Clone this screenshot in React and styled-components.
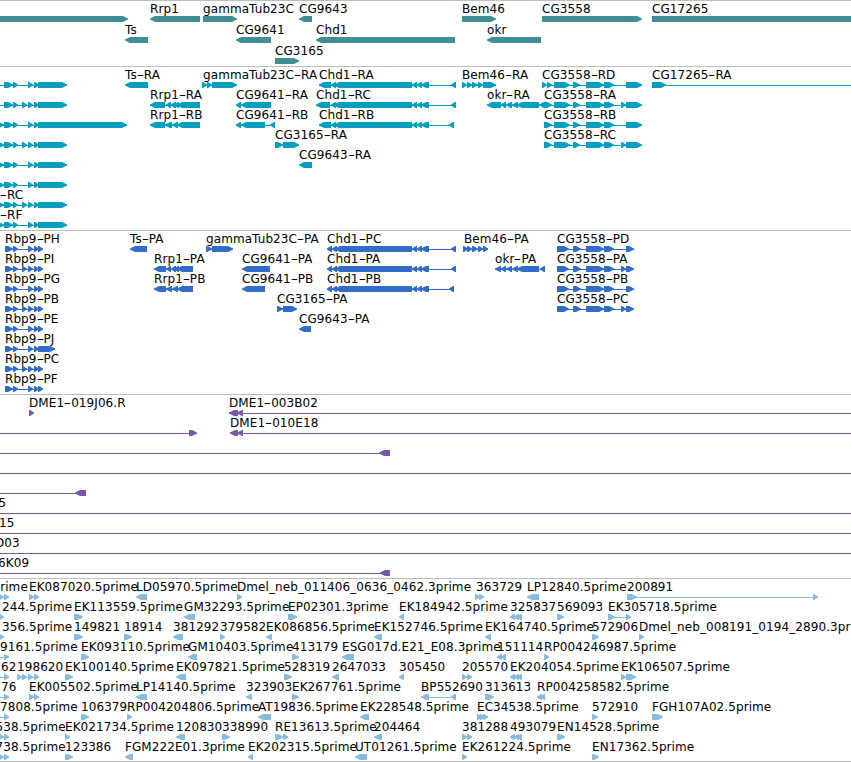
import React from "react";
import styled, { createGlobalStyle } from "styled-components";

const GlobalStyle = createGlobalStyle`
  body {
    margin: 0;
    background: #fff;
    overflow: hidden;
  }
`;

const Browser = styled.main`
  width: 851px;
  height: 762px;
  overflow: hidden;
  border-bottom: 1px solid #bebebe;
  box-sizing: border-box;
  font-family: "DejaVu Sans", sans-serif;
  font-size: 12px;
  letter-spacing: 0.08px;
  color: #000;
`;

const Track = styled.section`
  border-top: 1px solid #bebebe;
  padding: 1px 0 ${(p) => p.$gap}px;
  color: ${(p) => p.$color};
`;

const Row = styled.div`
  position: relative;
  display: flex;
  align-items: flex-start;
  height: ${(p) => p.$height}px;
  padding-top: 14px;
  box-sizing: border-box;
`;

const Strip = styled.svg`
  display: block;
  width: 851px;
  height: 6px;
  overflow: visible;
`;

const Label = styled.span`
  position: absolute;
  top: 0;
  left: ${(p) => p.$x}px;
  line-height: 14px;
  white-space: nowrap;
  color: #000;
`;

const Hyphen = styled.span`
  display: inline-block;
  width: 7px;
  text-align: center;
  transform: scaleX(1.7);
`;

// direction of the strand
const F = 1;
const R = -1;

const EDGE_L = -10;
const EDGE_R = 861;

// [label, strand, exons, { x: label position, from / to: ends of the line }]
const rbp = (extra, end = [38, 67], first = true) => [
  "",
  F,
  [
    ...(first ? [[-2, 4]] : []),
    [4, 13],
    [13, 18],
    ...(extra ? [[22, 27]] : []),
    [28, 33],
    [34, 39],
    end,
  ],
  { from: EDGE_L },
];
const named = (label, x, item) => [label, item[1], item[2], { ...item[3], x }];
const rbpP = (name, extra, end = [38, 43]) => [
  name,
  F,
  [[5, 13], [13, 18], ...(extra ? [[22, 27]] : []), [28, 33], [34, 39], end],
];
const chd = (name, start, end) => [
  name,
  R,
  [...start, [412, 417], [417, 421], [421, 429], end],
];
const cg3558 = (name, start, extra, end) => [
  name,
  F,
  [
    ...start,
    [586, 599],
    [594, 604],
    [604, 614],
    ...(extra ? [[621, 626]] : []),
    end,
  ],
];

const cgR = [[544, 552], [554, 570], [573, 580]];
const cgP = [[557, 569], [573, 581]];
const three = [[510, 514], [514, 518], [517, 521]];
const leftPair = ["", F, [[-1, 4], [4, 9]], { from: EDGE_L }];
const leftOne = ["", F, [[4, 9]], { from: EDGE_L }];
const leftTip = ["", F, [[-1, 4]], { from: EDGE_L }];

const tracks = [
  {
    color: "#408f94",
    gap: 1,
    rowHeight: 21,
    rows: [
      [
        ["", F, [[-10, 128]]],
        ["Rrp1", R, [[150, 200]]],
        ["gammaTub23C", F, [[203, 237]]],
        ["CG9643", R, [[299, 312]]],
        ["Bem46", F, [[462, 496]]],
        ["CG3558", F, [[542, 642]]],
        ["CG17265", F, [[652, 870]]],
      ],
      [
        ["Ts", R, [[125, 148]]],
        ["CG9641", R, [[236, 271]]],
        ["Chd1", R, [[316, 455]]],
        ["okr", R, [[487, 541]]],
      ],
      [["CG3165", F, [[275, 299]]]],
    ],
  },
  {
    color: "#009ebf",
    gap: 2,
    rowHeight: 20,
    rows: [
      [
        rbp(false, [38, 67], false),
        ["Ts-RA", R, [[125, 148]]],
        ["gammaTub23C-RA", F, [[203, 207], [207, 212], [212, 237]]],
        chd("Chd1-RA", [[319, 331], [331, 336], [334, 412]], [451, 456]),
        ["Bem46-RA", F, [[462, 467], [467, 472], [472, 478], [479, 483], [483, 496]]],
        cg3558("CG3558-RD", [[542, 547], [547, 552], [554, 570], [573, 580]], false, [626, 642]),
        ["CG17265-RA", F, [[652, 666]], { to: EDGE_R }],
      ],
      [
        rbp(true, [38, 67], false),
        ["Rrp1-RA", R, [[150, 165], [166, 171], [171, 174], [174, 177], [177, 200]]],
        ["CG9641-RA", R, [[236, 241], [241, 271]]],
        chd("Chd1-RC", [[316, 330], [331, 336], [334, 412]], [451, 456]),
        ["okr-RA", R, [[487, 501], [501, 506], [506, 512], [512, 518], [517, 539], [539, 545]]],
        cg3558("CG3558-RA", cgR, true, [626, 642]),
      ],
      [
        rbp(false, [38, 127]),
        ["Rrp1-RB", R, [[150, 165], [165, 172], [172, 178], [177, 200]]],
        ["CG9641-RB", R, [[236, 241], [241, 265], [270, 275]]],
        chd("Chd1-RB", [[319, 331], [331, 336], [334, 412]], [449, 454]),
        cg3558("CG3558-RB", cgR, false, [626, 642]),
      ],
      [
        rbp(true),
        ["CG3165-RA", F, [[275, 283], [283, 299]]],
        cg3558("CG3558-RC", cgR, true, [626, 642]),
      ],
      [rbp(false), ["CG9643-RA", R, [[299, 312]]]],
      [rbp(false)],
      [named("-RC", 0, rbp(true))],
      [named("-RF", 0, rbp(false))],
    ],
  },
  {
    color: "#316ccb",
    gap: 2,
    rowHeight: 20,
    rows: [
      [
        rbpP("Rbp9-PH", false),
        ["Ts-PA", R, [[130, 147]]],
        ["gammaTub23C-PA", F, [[206, 212], [212, 233]]],
        chd("Chd1-PC", [[327, 332], [332, 337], [335, 412]], [451, 456]),
        ["Bem46-PA", F, [[464, 468], [468, 472], [472, 478], [479, 483], [483, 488]]],
        cg3558("CG3558-PD", cgP, false, [626, 634]),
      ],
      [
        rbpP("Rbp9-PI", true),
        ["Rrp1-PA", R, [[154, 166], [166, 171], [171, 174], [174, 177], [177, 193]]],
        ["CG9641-PA", R, [[242, 270]]],
        chd("Chd1-PA", [[327, 332], [332, 337], [335, 412]], [451, 456]),
        ["okr-PA", R, [[495, 501], [501, 506], [506, 512], [512, 518], [517, 539], [540, 545]]],
        cg3558("CG3558-PA", cgP, true, [626, 634]),
      ],
      [
        rbpP("Rbp9-PG", false),
        ["Rrp1-PB", R, [[154, 166], [166, 172], [172, 178], [177, 193]]],
        ["CG9641-PB", R, [[242, 265]]],
        chd("Chd1-PB", [[327, 332], [332, 337], [335, 412]], [449, 454]),
        cg3558("CG3558-PB", cgP, false, [626, 634]),
      ],
      [
        rbpP("Rbp9-PB", true),
        ["CG3165-PA", F, [[277, 283], [283, 297]]],
        cg3558("CG3558-PC", cgP, true, [626, 634]),
      ],
      [rbpP("Rbp9-PE", false), ["CG9643-PA", R, [[299, 311]]]],
      [rbpP("Rbp9-PJ", false, [38, 55])],
      [rbpP("Rbp9-PC", true)],
      [rbpP("Rbp9-PF", false)],
    ],
  },
  {
    color: "#7759a8",
    gap: 2,
    rowHeight: 20,
    rows: [
      [
        ["DME1-019J06.R", F, [[29, 34]]],
        ["DME1-003B02", R, [[229, 238], [237, 243]], { to: EDGE_R }],
      ],
      [
        ["", F, [[189, 197]], { from: EDGE_L }],
        ["DME1-010E18", R, [[230, 238], [237, 243]], { to: EDGE_R }],
      ],
      [["", R, [[379, 390]], { from: EDGE_L }]],
      [["", R, [], { from: EDGE_L, to: EDGE_R }]],
      [["", R, [[75, 86]], { from: EDGE_L }]],
      [["5", R, [], { x: -1.5, from: EDGE_L, to: EDGE_R }]],
      [["15", R, [], { x: -1, from: EDGE_L, to: EDGE_R }]],
      [["D03", R, [], { x: -5, from: EDGE_L, to: EDGE_R }]],
      [["6K09", R, [[380, 390]], { x: -2, from: EDGE_L }]],
    ],
  },
  {
    color: "#88bcde",
    gap: 0,
    rowHeight: 20,
    rows: [
      [
        named("prime", -7.5, leftPair),
        ["EK087020.5prime", F, [[29, 34], [34, 39]]],
        ["LD05970.5prime", R, [[136, 147]]],
        ["Dmel_neb_011406_0636_0462.3prime", F, [[237, 242]]],
        ["363729", F, [[476, 480], [479, 484]]],
        ["LP12840.5prime", R, [[527, 539]]],
        ["200891", F, [[627, 637], [813, 818]]],
      ],
      [
        named("244.5prime", 2, leftTip),
        ["EK113559.5prime", F, [[74, 83]]],
        ["GM32293.5prime", R, [[184, 195]]],
        ["EP02301.3prime", F, [[288, 297]]],
        ["EK184942.5prime", R, [[399, 404]]],
        ["325837", R, three],
        ["569093", F, [[557, 564]]],
        ["EK305718.5prime", F, [[608, 615], [626, 631]]],
      ],
      [
        named("356.5prime", 2, leftTip),
        ["149821", F, [[74, 83]]],
        ["18914", F, [[124, 132]]],
        ["381292", R, [[173, 183]]],
        ["379582", F, [[220, 225]]],
        ["EK086856.5prime", R, [[266, 272]]],
        ["EK152746.5prime", R, [[374, 382]]],
        ["EK164740.5prime", R, [[485, 491]]],
        ["572906", F, [[592, 599]]],
        ["Dmel_neb_008191_0194_2890.3prime", F, [[639, 644]]],
      ],
      [
        named("9161.5prime", 0, leftOne),
        ["EK093110.5prime", F, [[81, 89]]],
        ["GM10403.5prime", R, [[188, 197]]],
        ["413179", F, [[292, 299]]],
        ["ESG017d.E21_E08.3prime", R, [[342, 354]]],
        ["151114", R, [[497, 502], [501, 506]]],
        ["RP004246987.5prime", F, [[544, 549]]],
      ],
      [
        named("62", 1, leftOne),
        ["198620", F, [[17, 22], [22, 27], [28, 33], [34, 39]]],
        ["EK100140.5prime", F, [[65, 73]]],
        ["EK097821.5prime", R, [[176, 186]]],
        ["528319", F, [[284, 292]]],
        ["2647033", R, [[332, 339]]],
        ["305450", R, [[399, 404]]],
        ["205570", F, [[462, 467], [467, 472]]],
        ["EK204054.5prime", R, three],
        ["EK106507.5prime", F, [[621, 626], [626, 636]]],
      ],
      [
        named("76", 1, leftOne),
        ["EK005502.5prime", F, [[29, 34], [34, 39]]],
        ["LP14140.5prime", R, [[136, 147]]],
        ["323903", R, [[246, 252]]],
        ["EK267761.5prime", F, [[292, 299]]],
        ["BP552690", R, [[421, 429], [451, 456]]],
        ["313613", F, [[485, 494]]],
        ["RP004258582.5prime", R, [[537, 541], [540, 545]]],
      ],
      [
        named("7808.5prime", 0, leftOne),
        ["106379", F, [[81, 89]]],
        ["RP004204806.5prime", F, [[127, 132]]],
        ["AT19836.5prime", R, [[258, 271]]],
        ["EK228548.5prime", R, [[360, 369]]],
        ["EC34538.5prime", F, [[477, 482], [480, 485], [484, 488]]],
        ["572910", F, [[592, 598]]],
        ["FGH107A02.5prime", F, [[652, 663]]],
      ],
      [
        named("538.5prime", -4.5, leftPair),
        ["EK021734.5prime", F, [[65, 70]]],
        ["120830", R, [[176, 185]]],
        ["338990", F, [[222, 230]]],
        ["RE13613.5prime", F, [[275, 283], [283, 288]]],
        ["204464", R, [[374, 382]]],
        ["381288", F, [[462, 467], [467, 472]]],
        ["493079", R, three],
        ["EN14528.5prime", F, [[557, 565]]],
      ],
      [
        named("738.5prime", -4.5, leftPair),
        ["123386", F, [[65, 73]]],
        ["FGM222E01.3prime", R, [[125, 133]]],
        ["EK202315.5prime", R, [[248, 253]]],
        ["UT01261.5prime", R, [[355, 367]]],
        ["EK261224.5prime", F, [[462, 467]]],
        ["EN17362.5prime", F, [[592, 599]]],
      ],
    ],
  },
];

// an exon is never drawn narrower than its arrow head
const exonPath = (x1, x2, strand) => {
  const w = Math.max(5, x2 - x1);
  const head = Math.min(6, w);
  if (strand === F) {
    return `M${x2 - w} 0H${x2 - head + 1}L${x2} 2.6V3.6L${x2 - head + 1} 6H${x2 - w}Z`;
  }
  return `M${x1 + w} 0H${x1 + head - 1}L${x1} 2.6V3.6L${x1 + head - 1} 6H${x1 + w}Z`;
};

const Feature = ({ item }) => {
  const [, strand, exons, opts = {}] = item;
  const from = opts.from ?? exons[0][0];
  const to = opts.to ?? exons[exons.length - 1][1];
  const hasLine = exons.length !== 1 || opts.from || opts.to;
  return (
    <g>
      {hasLine && <rect x={from} y={3} width={to - from} height={1} shapeRendering="crispEdges" />}
      {exons.map(([a, b]) => (
        <path key={a} d={exonPath(a, b, strand)} />
      ))}
    </g>
  );
};

const Name = ({ item }) => {
  const [label, , exons, opts = {}] = item;
  const [head, tail] = label.split("-");
  return (
    <Label $x={opts.x ?? exons[0][0]}>
      {head}
      {tail && <Hyphen>-</Hyphen>}
      {tail}
    </Label>
  );
};

const App = () => {
  return (
    <>
      <GlobalStyle />
      <Browser>
        {tracks.map((track) => (
          <Track key={track.color} $color={track.color} $gap={track.gap}>
            {track.rows.map((row, i) => (
              <Row key={i} $height={track.rowHeight}>
                <Strip fill="currentColor">
                  {row.map((item, j) => (
                    <Feature key={j} item={item} />
                  ))}
                </Strip>
                {row.map((item, j) => item[0] && <Name key={j} item={item} />)}
              </Row>
            ))}
          </Track>
        ))}
      </Browser>
    </>
  );
};

export default App;
